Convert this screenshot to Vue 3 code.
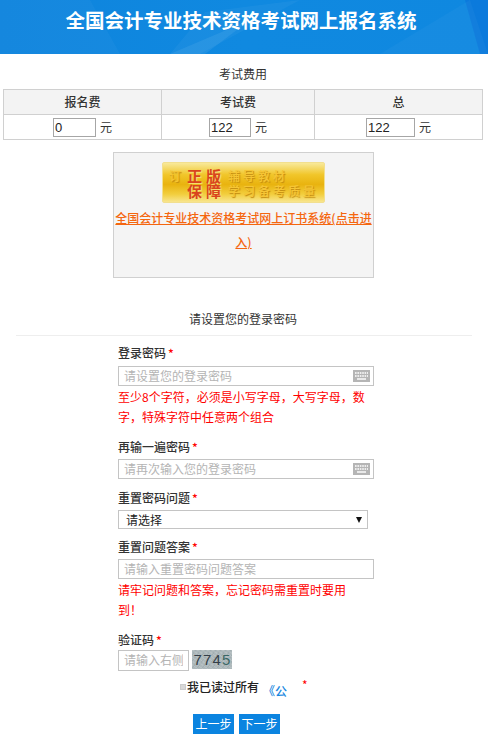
<script setup>
const fees = [
  { name: '报名费', value: '0', w: 43 },
  { name: '考试费', value: '122', w: 42 },
  { name: '总', value: '122', w: 49 }
]
</script>

<template>
  <div class="page" lang="zh-CN">
    <header class="head">
      <svg class="head-art" viewBox="0 0 488 54" preserveAspectRatio="none">
        <polygon points="0,0 90,0 120,54 0,54" fill="#ffffff" opacity="0.03" />
        <polygon points="170,54 250,20 205,54" fill="#ffffff" opacity="0.07" />
        <polygon points="170,54 205,12 300,0 200,54" fill="#ffffff" opacity="0.04" />
        <polygon points="465,0 488,0 488,54 480,54" fill="#0a6fd8" opacity="0.55" />
        <polygon points="380,54 470,0 488,54" fill="#ffffff" opacity="0.03" />
      </svg>
      <h1>全国会计专业技术资格考试网上报名系统</h1>
    </header>

    <div class="cap">考试费用</div>
    <table class="fees">
      <colgroup>
        <col class="c1" /><col class="c2" /><col class="c3" />
      </colgroup>
      <thead>
        <tr><th v-for="f in fees" :key="f.name">{{ f.name }}</th></tr>
      </thead>
      <tbody>
        <tr>
          <td v-for="f in fees" :key="f.name">
            <input class="fee-in" :style="{ width: f.w + 'px' }" :value="f.value" readonly /><span class="yuan">元</span>
          </td>
        </tr>
      </tbody>
    </table>

    <div class="promo">
      <div class="promo-img">
        <div class="pl"><i class="y lead">订</i><b>正版</b><i class="y">辅导教材</i></div>
        <div class="pl l2"><b>保障</b><i class="y">学习备考质量</i></div>
      </div>
      <a class="promo-link" href="#">全国会计专业技术资格考试网上订书系统(点击进入)</a>
    </div>

    <div class="sec-title">请设置您的登录密码</div>

    <form class="form" @submit.prevent>
      <label class="lb first">登录密码<em>*</em></label>
      <div class="field">
        <input placeholder="请设置您的登录密码" />
        <svg class="kbd" viewBox="0 0 17 12">
          <rect width="17" height="12" fill="#b5b5b5" />
          <path d="M2 3h13M2 6h13" stroke="#fff" stroke-width="1.4" stroke-dasharray="1.6 .8" />
          <path d="M4 9h9" stroke="#fff" stroke-width="1.4" />
        </svg>
      </div>
      <p class="hint">至少8个字符，必须是小写字母，大写字母，数字，特殊字符中任意两个组合</p>

      <label class="lb second">再输一遍密码<em>*</em></label>
      <div class="field">
        <input placeholder="请再次输入您的登录密码" />
        <svg class="kbd" viewBox="0 0 17 12">
          <rect width="17" height="12" fill="#b5b5b5" />
          <path d="M2 3h13M2 6h13" stroke="#fff" stroke-width="1.4" stroke-dasharray="1.6 .8" />
          <path d="M4 9h9" stroke="#fff" stroke-width="1.4" />
        </svg>
      </div>

      <label class="lb third">重置密码问题<em>*</em></label>
      <div class="sel"><span>请选择</span><i class="caret"></i></div>

      <label class="lb fourth">重置问题答案<em>*</em></label>
      <div class="field">
        <input placeholder="请输入重置密码问题答案" />
      </div>
      <p class="hint">请牢记问题和答案，忘记密码需重置时要用到！</p>

      <label class="lb fifth">验证码<em>*</em></label>
      <div class="cap-row">
        <input class="code" placeholder="请输入右侧验证码" />
        <div class="captcha"><span>7</span><span>7</span><span>4</span><span class="t">5</span></div>
      </div>
    </form>

    <div class="agree">
      <i class="box"></i><b>我已读过所有</b><a href="#">《公</a><em>*</em>
    </div>

    <div class="btns">
      <button type="button">上一步</button>
      <button type="button">下一步</button>
    </div>
  </div>
</template>

<style scoped>
.page {
  width: 488px;
  height: 738px;
  overflow: hidden;
  background: #fff;
  color: #333;
  font: 12px/20px "Noto Sans CJK SC", "Liberation Sans", sans-serif;
  text-spacing-trim: space-all;
  font-kerning: none;
}
.head {
  position: relative;
  height: 54px;
  background: linear-gradient(90deg, #0e84dd 0%, #1089e0 50%, #0f88e0 100%);
  overflow: hidden;
}
.head-art {
  position: absolute;
  inset: 0;
  width: 100%;
  height: 100%;
}
.head h1 {
  position: relative;
  margin: 0;
  padding: 5px 6px 0 0;
  text-align: center;
  color: #fff;
  font-size: 19.5px;
  line-height: 30px;
  font-weight: 700;
}
.cap {
  margin-top: 10px;
  padding-right: 2px;
  text-align: center;
  line-height: 20px;
}
.fees {
  margin: 5px 0 0 3px;
  width: 479px;
  border-collapse: collapse;
  table-layout: fixed;
}
.c1 { width: 158px; }
.c2 { width: 153px; }
.c3 { width: 168px; }
.fees th,
.fees td {
  border: 1px solid #d0d0d0;
  text-align: center;
  padding: 0;
  height: 24px;
}
.fees th {
  background: #f3f3f3;
  font-weight: 500;
  font-size: 12px;
}
.fee-in {
  box-sizing: border-box;
  height: 19px;
  padding: 0 1px;
  border: 1px solid #a6a6a6;
  outline: none;
  font: 13px/17px "Liberation Sans", sans-serif;
  color: #222;
  vertical-align: middle;
}
.yuan {
  display: inline-block;
  margin: 0 0 2px 4px;
  line-height: 18px;
  vertical-align: middle;
}
.promo {
  box-sizing: border-box;
  width: 261px;
  height: 126px;
  margin: 12px 0 0 113px;
  padding-top: 9px;
  background: #f4f4f4;
  border: 1px solid #d0d0d0;
  text-align: center;
}
.promo-img {
  box-sizing: border-box;
  width: 163px;
  height: 41px;
  margin: 0 auto;
  padding: 5px 0 0 6px;
  border-radius: 2px;
  border: 1px solid #f2df8e;
  background: linear-gradient(180deg, #f8e99a 0%, #f1c62a 30%, #e9b30f 55%, #f2ce3e 80%, #f8e58e 100%);
  text-align: left;
  overflow: hidden;
}
.pl {
  display: flex;
  align-items: center;
  height: 15px;
  line-height: 15px;
  white-space: nowrap;
}
.l2 { padding-left: 18px; }
.pl b {
  width: 41px;
  flex: none;
  font-size: 15px;
  font-weight: 700;
  letter-spacing: 4px;
  color: #d9451c;
  text-shadow: 1px 1px 1px #f6e27a;
}
.pl .y {
  font-style: normal;
  font-size: 12px;
  font-weight: 500;
  letter-spacing: 3px;
  color: #f6c535;
  text-shadow: 1px 1px 1px #c08a10;
}
.pl .lead {
  width: 18px;
  flex: none;
  letter-spacing: 0;
}
.promo-link {
  display: block;
  margin-top: 3px;
  line-height: 24px;
  color: #f4660f;
  font-weight: 500;
  text-decoration: underline;
}
.sec-title {
  margin: 31px 16px 0;
  padding: 0 2px 6px 0;
  line-height: 20px;
  text-align: center;
  border-bottom: 1px solid #eee;
}
.form {
  width: 256px;
  margin-left: 118px;
}
.lb {
  display: block;
  line-height: 18px;
  font-weight: 500;
  color: #333;
}
.lb em,
.agree em {
  margin-left: 2px;
  font-style: normal;
  color: #f00;
}
.first { margin: 8px 0 4px; }
.second { margin: 11px 0 3px; }
.third { margin: 10px 0 3px; }
.fourth { margin: 9px 0 3px; }
.fifth { margin: 11px 0 1px; }
.field {
  position: relative;
  height: 20px;
}
.field input,
.code {
  box-sizing: border-box;
  display: block;
  width: 100%;
  height: 20px;
  padding: 0 5px 2px;
  border: 1px solid #c4c4c4;
  outline: none;
  font: inherit;
  line-height: 16px;
  background: #fff;
}
input::placeholder {
  color: #b4b4b4;
  opacity: 1;
}
.kbd {
  position: absolute;
  top: 4px;
  right: 4px;
  width: 17px;
  height: 12px;
}
.hint {
  width: 250px;
  margin: 1px 0 0;
  line-height: 20px;
  color: #f00;
}
.sel {
  box-sizing: border-box;
  display: flex;
  align-items: center;
  justify-content: space-between;
  width: 250px;
  height: 19px;
  padding: 1px 5px 0 7px;
  border: 1px solid #c4c4c4;
  color: #222;
}
.caret {
  width: 0;
  height: 0;
  border-left: 3px solid transparent;
  border-right: 3px solid transparent;
  border-top: 6px solid #111;
}
.cap-row {
  display: flex;
  align-items: flex-start;
  gap: 3px;
}
.code {
  width: 71px;
  height: 21px;
}
.captcha {
  display: flex;
  justify-content: space-around;
  align-items: center;
  box-sizing: border-box;
  width: 40px;
  height: 19px;
  padding: 0 1px;
  background:
    repeating-linear-gradient(37deg, rgba(255,255,255,.12) 0 1px, transparent 1px 3px),
    repeating-linear-gradient(-53deg, rgba(90,110,120,.12) 0 1px, transparent 1px 4px),
    #adb8bb;
  color: #343f49;
  font: 400 15px/19px "Liberation Sans", sans-serif;
}
.captcha .t { color: #3b6866; }
.agree {
  display: flex;
  align-items: flex-start;
  height: 24px;
  margin: 6px 0 0 180px;
  white-space: nowrap;
}
.box {
  flex: none;
  width: 6px;
  height: 6px;
  margin: 7px 1px 0 0;
  background: #d8d8d8;
  border: 1px solid #ccc;
  box-sizing: border-box;
}
.agree b {
  font-weight: 500;
  color: #222;
}
.agree a {
  margin: 4px 0 0 4px;
  color: #1787e0;
  font-weight: 500;
  text-decoration: none;
}
.agree em {
  margin-left: 15px;
  margin-top: -2px;
}
.btns {
  display: flex;
  gap: 5px;
  margin: 13px 0 0 193px;
}
.btns button {
  width: 41px;
  height: 20px;
  padding: 0;
  border: 0;
  background: #0b84e0;
  color: #fff;
  font: inherit;
  line-height: 20px;
}
</style>

<style>
html, body { margin: 0; background: #fff; }
</style>
